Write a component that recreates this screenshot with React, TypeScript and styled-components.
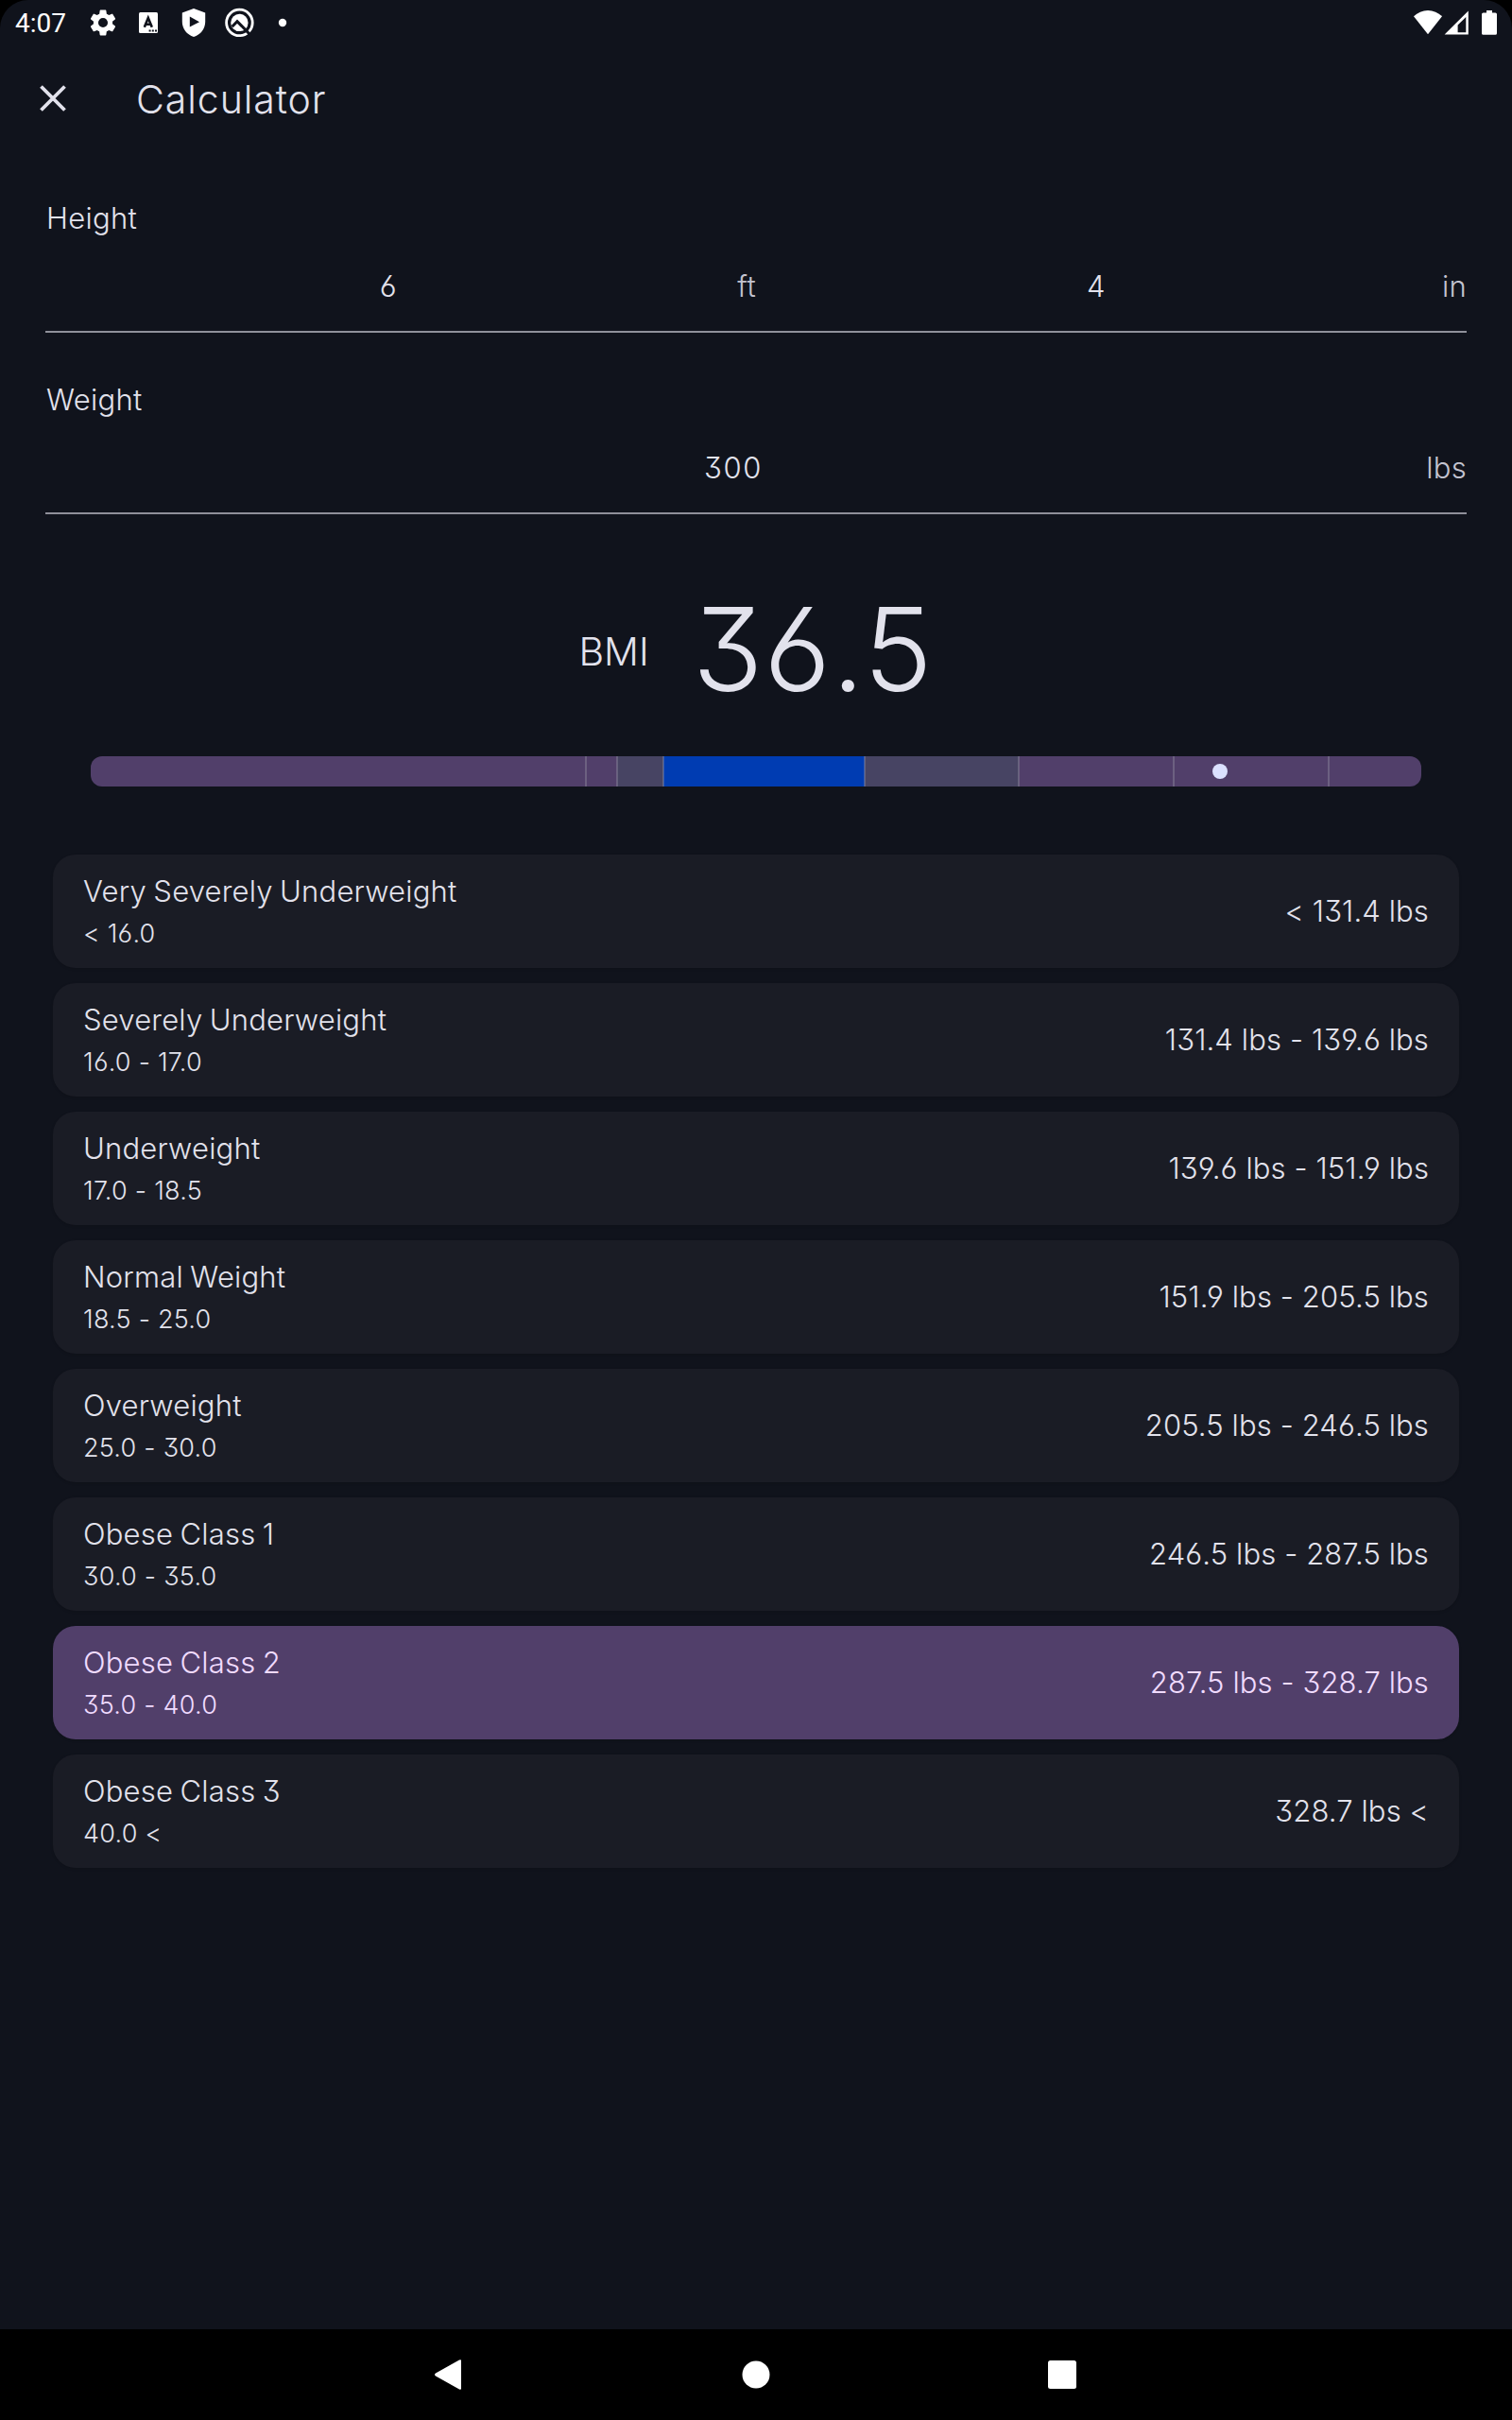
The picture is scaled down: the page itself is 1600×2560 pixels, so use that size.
import React, { useState } from 'react';
import styled, { createGlobalStyle } from 'styled-components';

const colors = {
  background: '#10131c',
  card: '#1a1c25',
  active: '#513f6a',
  onActive: '#f0dbff',
  text: '#e2e2ec',
  unit: '#c3c3d0',
  outline: '#8f909a',
  scaleMild: '#474463',
  scaleNormal: '#003cb2',
  marker: '#dbe1ff',
};

const GlobalStyle = createGlobalStyle`
  * {
    box-sizing: border-box;
  }

  body {
    margin: 0;
    background: #000;
    color: ${colors.text};
    font-family: Inter, 'Liberation Sans', sans-serif;
    font-weight: 300;
    font-feature-settings: 'cv03', 'cv04', 'cv09';
  }
`;

const Screen = styled.div`
  display: flex;
  flex-direction: column;
  width: 1600px;
  height: 2560px;
  background: #000;
`;

const Page = styled.div`
  flex: 1;
  border-radius: 30px 30px 0 0;
  background: ${colors.background};
`;

const StatusBar = styled.div`
  display: flex;
  align-items: center;
  justify-content: space-between;
  height: 48px;
  padding: 0 16px;
  color: #fff;
`;

const StatusGroup = styled.div`
  display: flex;
  align-items: center;

  svg {
    display: block;
  }
`;

const Clock = styled.span`
  width: 71px;
  padding-top: 2px;
  font-family: Roboto, sans-serif;
  font-size: 28px;
  font-weight: 400;
  line-height: 34px;
`;

const Toolbar = styled.header`
  display: flex;
  align-items: center;
  height: 112px;
  padding-left: 40px;
`;

const CloseButton = styled.button`
  display: flex;
  width: 104px;
  padding: 0;
  border: none;
  background: none;
  color: inherit;
`;

const Title = styled.h1`
  margin: 0;
  padding-top: 2px;
  font-size: 41px;
  font-weight: 300;
  line-height: 50px;
  letter-spacing: 0.95px;
`;

const Form = styled.section`
  display: flex;
  flex-direction: column;
  gap: 53px;
  padding: 53px 48px 0;
`;

const Label = styled.div`
  padding-left: 1px;
  font-size: 31px;
  line-height: 36px;
  letter-spacing: 0.3px;
`;

const FieldRow = styled.div`
  display: flex;
  height: 103px;
  padding-top: 36px;
  border-bottom: 2px solid ${colors.outline};
`;

const Measure = styled.label`
  display: flex;
  flex: 1;
  font-size: 31px;
  line-height: 36px;
`;

const Value = styled.input`
  flex: 1;
  min-width: 0;
  height: 36px;
  padding: 0 0 0 2px;
  border: none;
  outline: none;
  background: none;
  color: ${colors.text};
  font: inherit;
  font-feature-settings: inherit;
  letter-spacing: 1.6px;
  text-align: center;
`;

const Unit = styled.span`
  padding-left: 7px;
  color: ${colors.unit};
  letter-spacing: 0.3px;
`;

const Result = styled.div`
  display: flex;
  align-items: center;
  justify-content: center;
  gap: 46px;
  height: 160px;
  margin-top: 63px;
`;

const ResultLabel = styled.span`
  padding-top: 4px;
  font-size: 41px;
  line-height: 50px;
`;

const ResultValue = styled.span`
  font-size: 123px;
  line-height: 160px;
  letter-spacing: 0.8px;
`;

const Scale = styled.div`
  position: relative;
  display: flex;
  height: 32px;
  margin: 33px 96px 0;
  border-radius: 12px;
  overflow: hidden;
`;

const Segment = styled.div<{ $span: number; $color: string }>`
  flex: ${({ $span }) => $span} 0 0;
  background: ${({ $color }) => $color};
`;

const Tick = styled.div`
  position: absolute;
  top: 0;
  width: 2px;
  height: 100%;
  margin-left: -1px;
  background: rgba(150, 148, 165, 0.4);
`;

const Marker = styled.div`
  position: absolute;
  top: 8px;
  width: 16px;
  height: 16px;
  margin-left: -8px;
  border-radius: 50%;
  background: ${colors.marker};
`;

const List = styled.ul`
  display: flex;
  flex-direction: column;
  gap: 16px;
  margin: 72px 56px 0;
  padding: 0;
  list-style: none;
`;

const Card = styled.li<{ $active: boolean }>`
  display: flex;
  align-items: center;
  justify-content: space-between;
  height: 120px;
  padding: 0 32px;
  border-radius: 24px;
  background: ${({ $active }) => ($active ? colors.active : colors.card)};
  box-shadow: 0 1px 3px rgba(0, 0, 0, 0.15);
  color: ${({ $active }) => ($active ? colors.onActive : colors.text)};
`;

const CardText = styled.div`
  padding-top: 2px;
`;

const CardName = styled.div`
  font-size: 31px;
  line-height: 46px;
  letter-spacing: 0.2px;
  word-spacing: -1.5px;
`;

const CardRange = styled.div`
  font-size: 27px;
  line-height: 44px;
  letter-spacing: 0.25px;
`;

const CardWeight = styled.div`
  padding-bottom: 1px;
  font-size: 31px;
  line-height: 40px;
  letter-spacing: 0.12px;
`;

const NavBar = styled.nav`
  display: flex;
  align-items: center;
  justify-content: center;
  height: 96px;
  background: #000;
`;

const NavButton = styled.button`
  display: flex;
  justify-content: center;
  width: 324px;
  padding: 0;
  border: none;
  background: none;
`;

const MAX_BMI = 43;

interface ICategory {
  name: string;
  range: string;
  weight: string;
  from: number;
  to: number;
  color: string;
}

const categories: ICategory[] = [
  { name: 'Very Severely Underweight', range: '< 16.0', weight: '< 131.4 lbs', from: 0, to: 16, color: colors.active },
  { name: 'Severely Underweight', range: '16.0 - 17.0', weight: '131.4 lbs - 139.6 lbs', from: 16, to: 17, color: colors.active },
  { name: 'Underweight', range: '17.0 - 18.5', weight: '139.6 lbs - 151.9 lbs', from: 17, to: 18.5, color: colors.scaleMild },
  { name: 'Normal Weight', range: '18.5 - 25.0', weight: '151.9 lbs - 205.5 lbs', from: 18.5, to: 25, color: colors.scaleNormal },
  { name: 'Overweight', range: '25.0 - 30.0', weight: '205.5 lbs - 246.5 lbs', from: 25, to: 30, color: colors.scaleMild },
  { name: 'Obese Class 1', range: '30.0 - 35.0', weight: '246.5 lbs - 287.5 lbs', from: 30, to: 35, color: colors.active },
  { name: 'Obese Class 2', range: '35.0 - 40.0', weight: '287.5 lbs - 328.7 lbs', from: 35, to: 40, color: colors.active },
  { name: 'Obese Class 3', range: '40.0 <', weight: '328.7 lbs <', from: 40, to: MAX_BMI, color: colors.active },
];

const toPercent = (bmi: number) => `${(bmi / MAX_BMI) * 100}%`;

const NotificationIcons = () => (
  <svg width="220" height="48" viewBox="87 0 220 48" fill="#fff">
    <g transform="translate(92.2 7.2) scale(1.4)">
      <path d="M19.14 12.94c.04-.3.06-.61.06-.94 0-.32-.02-.64-.07-.94l2.03-1.58a.49.49 0 0 0 .12-.61l-1.92-3.32a.49.49 0 0 0-.59-.22l-2.39.96c-.5-.38-1.03-.7-1.62-.94l-.36-2.54a.48.48 0 0 0-.48-.41h-3.84a.48.48 0 0 0-.47.41l-.36 2.54c-.59.24-1.13.57-1.62.94l-2.39-.96a.48.48 0 0 0-.59.22L2.74 8.87a.48.48 0 0 0 .12.61l2.03 1.58c-.05.3-.09.63-.09.94s.02.64.07.94l-2.03 1.58a.49.49 0 0 0-.12.61l1.92 3.32c.12.22.37.29.59.22l2.39-.96c.5.38 1.03.7 1.62.94l.36 2.54c.05.24.24.41.48.41h3.84c.24 0 .44-.17.47-.41l.36-2.54c.59-.24 1.13-.56 1.62-.94l2.39.96c.22.08.47 0 .59-.22l1.92-3.32a.48.48 0 0 0-.12-.61l-2.01-1.58zM12 15.6a3.6 3.6 0 1 1 0-7.2 3.6 3.6 0 0 1 0 7.2z" />
    </g>
    <rect x="147" y="13" width="20" height="22" rx="1.5" />
    <path d="M152.8 28.8 156.8 19 160.8 28.8M154.2 25.8H159.4" fill="none" stroke={colors.background} strokeWidth="2.6" />
    <path d="M157.6 31.5h2v2h-2zM160.8 31.5h2v2h-2zM164 31.5h2v2h-2z" fill={colors.background} />
    <path d="M205 9 217.2 13.4V23C217.2 30.4 212.2 36.8 205 39 197.8 36.8 192.8 30.4 192.8 23V13.4Z" />
    <path d="M200.8 17.6V28.6L211 23.2Z" fill={colors.background} />
    <circle cx="253.4" cy="23.9" r="13.8" fill="none" stroke="#fff" strokeWidth="2.8" />
    <circle cx="253.4" cy="23.9" r="9.2" />
    <path d="M245.6 28.2 251 22.6 264.4 36.4" fill="none" stroke={colors.background} strokeWidth="3" />
    <circle cx="299" cy="24" r="4.2" />
  </svg>
);

const SystemIcons = () => (
  <svg width="90" height="48" viewBox="1494 0 90 48" fill="#fff">
    <path d="M1496 17.2A21.5 21.5 0 0 1 1526 17.2L1511 36.2Z" />
    <path fillRule="evenodd" d="M1553.8 11.6V36.6H1528.6ZM1551.3 18 1542.6 26.4V34.2H1551.3Z" />
    <path d="M1573 11h6v2.4h3.4a1.6 1.6 0 0 1 1.6 1.6V35.2a1.6 1.6 0 0 1-1.6 1.6h-12.8a1.6 1.6 0 0 1-1.6-1.6V15a1.6 1.6 0 0 1 1.6-1.6H1573Z" />
  </svg>
);

interface IMeasureFieldProps {
  unit: string;
  initialValue: string;
}

const MeasureField = ({ unit, initialValue }: IMeasureFieldProps) => {
  const [value, setValue] = useState(initialValue);

  return (
    <Measure>
      <Value value={value} onChange={event => setValue(event.target.value)} />
      <Unit>{unit}</Unit>
    </Measure>
  );
};

const App = () => {
  const bmi = 36.5;

  return (
    <Screen>
      <GlobalStyle />
      <Page>
        <StatusBar>
          <StatusGroup>
            <Clock>4:07</Clock>
            <NotificationIcons />
          </StatusGroup>
          <StatusGroup>
            <SystemIcons />
          </StatusGroup>
        </StatusBar>
        <Toolbar>
          <CloseButton aria-label="Close">
            <svg width="32" height="32" viewBox="0 0 32 32">
              <path d="M3.5 3.5 28.5 28.5M28.5 3.5 3.5 28.5" stroke={colors.text} strokeWidth="3.8" />
            </svg>
          </CloseButton>
          <Title>Calculator</Title>
        </Toolbar>
        <Form>
          <div>
            <Label>Height</Label>
            <FieldRow>
              <MeasureField unit="ft" initialValue="6" />
              <MeasureField unit="in" initialValue="4" />
            </FieldRow>
          </div>
          <div>
            <Label>Weight</Label>
            <FieldRow>
              <MeasureField unit="lbs" initialValue="300" />
            </FieldRow>
          </div>
        </Form>
        <Result>
          <ResultLabel>BMI</ResultLabel>
          <ResultValue>{bmi.toFixed(1)}</ResultValue>
        </Result>
        <Scale>
          {categories.map(({ name, from, to, color }) => (
            <Segment key={name} $span={to - from} $color={color} />
          ))}
          {categories.slice(1).map(({ name, from }) => (
            <Tick key={name} style={{ left: toPercent(from) }} />
          ))}
          <Marker style={{ left: toPercent(bmi) }} />
        </Scale>
        <List>
          {categories.map(({ name, range, weight, from, to }) => (
            <Card key={name} $active={bmi >= from && bmi < to}>
              <CardText>
                <CardName>{name}</CardName>
                <CardRange>{range}</CardRange>
              </CardText>
              <CardWeight>{weight}</CardWeight>
            </Card>
          ))}
        </List>
      </Page>
      <NavBar>
        <NavButton aria-label="Back">
          <svg width="32" height="34" viewBox="2 0 32 34" fill="#fff">
            <path d="M28 1.6Q30 .4 30 2.4V31.6Q30 33.6 28 32.4L3 18.4Q1 17 3 15.6Z" />
          </svg>
        </NavButton>
        <NavButton aria-label="Home">
          <svg width="30" height="30" viewBox="0 0 30 30" fill="#fff">
            <circle cx="15" cy="15" r="14.5" />
          </svg>
        </NavButton>
        <NavButton aria-label="Overview">
          <svg width="30" height="30" viewBox="0 0 30 30" fill="#fff">
            <rect width="30" height="30" rx="2.5" />
          </svg>
        </NavButton>
      </NavBar>
    </Screen>
  );
};

export default App;
